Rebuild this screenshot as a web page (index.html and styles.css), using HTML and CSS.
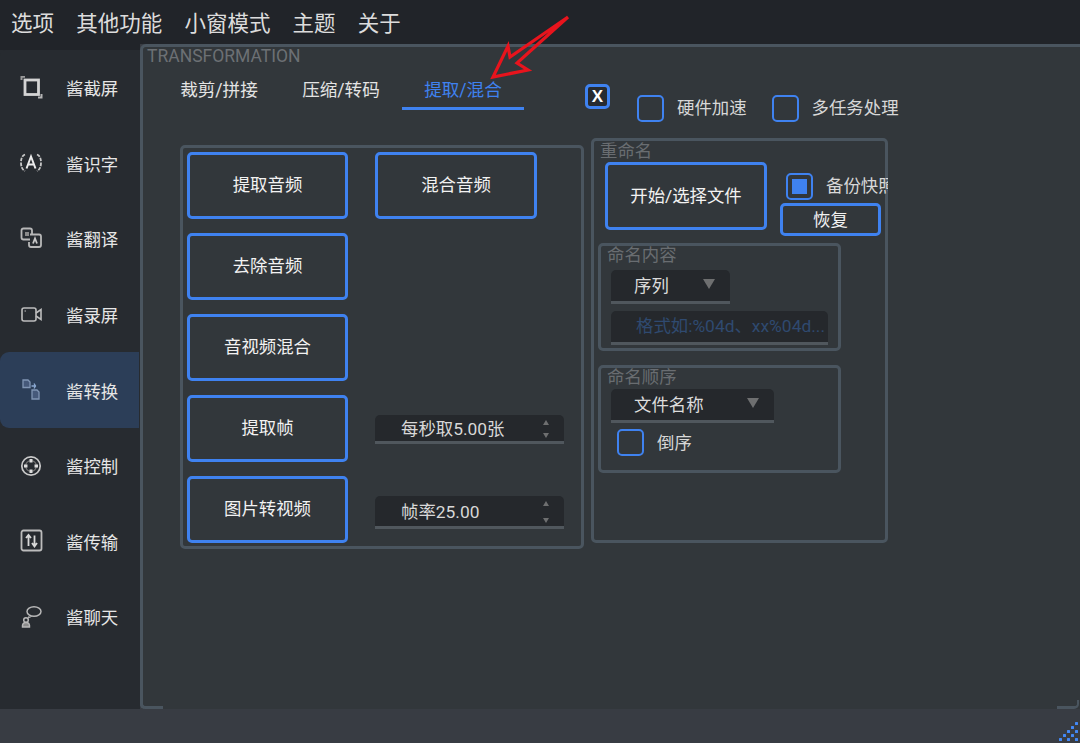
FILE: index.html
```html
<!DOCTYPE html>
<html lang="zh">
<head>
<meta charset="utf-8">
<title>TRANSFORMATION</title>
<link rel="stylesheet" href="styles.css">
</head>
<body>
<div class="app">
  <nav class="menubar">
    <span>选项</span><span>其他功能</span><span>小窗模式</span><span>主题</span><span>关于</span>
  </nav>
  <div class="middle">
    <div class="side-wrap">
      <aside class="sidebar">
        <div class="side-item">
          <svg class="ico" viewBox="0 0 24 24" fill="none" stroke="#d4d4d4"><rect x="6" y="4" width="13.500" height="14.500" stroke-width="2.800"/><path d="M2.500 4V0.800H6" stroke-width="2" stroke="#9a9a9a"/><path d="M22.500 18V21.500H19" stroke-width="2" stroke="#b4b4b4"/></svg>
          <span>酱截屏</span>
        </div>
        <div class="side-item">
          <svg class="ico" viewBox="0 0 24 24" fill="none" stroke="#c8c8c8" stroke-width="1.800"><path d="M6 3.500Q2 5 2 11.500T6 20" stroke-dasharray="3.500 1.200"/><path d="M18 3.500Q22 5 22 11.500T18 20" stroke-dasharray="3.500 1.200"/><path d="M7.500 17.500L12 5.500L16.500 17.500M9.500 13.500H14.500" stroke="#ececec" stroke-width="2"/></svg>
          <span>酱识字</span>
        </div>
        <div class="side-item">
          <svg class="ico" viewBox="0 0 24 24" fill="none" stroke="#b8b8b8" stroke-width="1.800"><path d="M11 12.500H4.500Q2.500 12.500 2.500 10.500V3.500Q2.500 1.500 4.500 1.500H11Q13 1.500 13 3.500V7.500"/><path d="M11 7.500H20Q22 7.500 22 9.500V18Q22 20 20 20H12Q10 20 10 18V15"/><rect x="6" y="5" width="4" height="4" fill="#8a8a8a" stroke="none"/><path d="M14 16.500L16 11.500L18 16.500" stroke="#c8c8c8"/></svg>
          <span>酱翻译</span>
        </div>
        <div class="side-item">
          <svg class="ico" viewBox="0 0 24 24" fill="none" stroke="#bdbdbd" stroke-width="1.600"><rect x="3" y="5" width="14" height="13" rx="2"/><path d="M17 10L22 6.500V16.500L17 13"/><path d="M5.500 8H7" stroke-width="1"/></svg>
          <span>酱录屏</span>
        </div>
        <div class="side-item active">
          <svg class="ico" viewBox="0 0 24 24" fill="#46597a" stroke="#8095b4" stroke-width="1.300"><path d="M4 2H9L11 4V9.500H4Z"/><path d="M13 12H18L20 14V21H13Z"/><path d="M12.500 8H16M15 5.500L16.500 8L15 10.500" stroke="#8dabd4" fill="none"/></svg>
          <span>酱转换</span>
        </div>
        <div class="side-item">
          <svg class="ico" viewBox="0 0 24 24" fill="none" stroke="#cacaca" stroke-width="1.700"><circle cx="12" cy="12" r="9.200"/><circle cx="12" cy="12" r="5.400" stroke-width="1.200" stroke="#777"/><g fill="#dcdcdc" stroke="none"><rect x="10.500" y="5" width="3" height="3.500"/><rect x="10.500" y="15.500" width="3" height="3.500"/><rect x="5" y="10.500" width="3.500" height="3"/><rect x="15.500" y="10.500" width="3.500" height="3"/></g></svg>
          <span>酱控制</span>
        </div>
        <div class="side-item">
          <svg class="ico" viewBox="0 0 24 24" fill="none" stroke="#bcbcbc" stroke-width="1.800"><rect x="2.500" y="1.500" width="20" height="20" rx="2"/><path d="M9.500 17V6.500M7 9L9.500 6L12 9M15.500 6.500V17M13 14L15.500 17.500L18 14" stroke="#d8d8d8"/></svg>
          <span>酱传输</span>
        </div>
        <div class="side-item">
          <svg class="ico" viewBox="0 0 24 24" fill="none" stroke="#b8b8b8" stroke-width="1.500"><ellipse cx="15" cy="6.500" rx="7" ry="4.800"/><path d="M10.500 10.500L9 13L12.500 11.500" stroke-width="1"/><circle cx="7" cy="15" r="2.300"/><path d="M3.500 22Q3 17.500 7 17.500T10.500 22Z" fill="#8a8a8a"/></svg>
          <span>酱聊天</span>
        </div>
      </aside>
    </div>
    <main class="panel">
      <div class="panel-title">TRANSFORMATION</div>
      <div class="header-row">
        <div class="tabs">
          <div class="tab">裁剪/拼接</div>
          <div class="tab">压缩/转码</div>
          <div class="tab current">提取/混合</div>
        </div>
        <div class="close-box">X</div>
        <label class="check hw"><i class="box"></i><span>硬件加速</span></label>
        <label class="check mt"><i class="box"></i><span>多任务处理</span></label>
      </div>
      <div class="body-row">
        <section class="group media">
          <button class="btn">提取音频</button>
          <button class="btn">混合音频</button>
          <button class="btn">去除音频</button>
          <div></div>
          <button class="btn">音视频混合</button>
          <div></div>
          <button class="btn">提取帧</button>
          <div class="spin short"><span>每秒取5.00张</span><span class="arrows"><i class="up"></i><i class="down"></i></span></div>
          <button class="btn">图片转视频</button>
          <div class="spin tall"><span>帧率25.00</span><span class="arrows"><i class="up"></i><i class="down"></i></span></div>
        </section>
        <section class="group rename">
          <div class="legend rename-legend">重命名</div>
          <div class="rename-top">
            <button class="btn start">开始/选择文件</button>
            <div class="rename-side">
              <label class="check backup"><i class="box on"></i><span class="clip">备份快照</span></label>
              <button class="btn restore">恢复</button>
            </div>
          </div>
          <div class="group sub content-box">
            <div class="legend">命名内容</div>
            <div class="field combo seq"><span>序列</span><i class="tri"></i></div>
            <div class="field input">格式如:%04d、xx%04d...</div>
          </div>
          <div class="group sub order-box">
            <div class="legend">命名顺序</div>
            <div class="field combo name"><span>文件名称</span><i class="tri"></i></div>
            <label class="check reverse"><i class="box"></i><span>倒序</span></label>
          </div>
        </section>
      </div>
    </main>
  </div>
  <footer class="statusbar">
    <svg class="grip" width="24" height="24" viewBox="0 0 24 24" fill="#4388f5">
      <rect x="19" y="3" width="3" height="3" rx="0.500"/>
      <rect x="15" y="7" width="3" height="3" rx="0.500"/>
      <rect x="11" y="11" width="3" height="3" rx="0.500"/><rect x="19" y="11" width="3" height="3" rx="0.500"/>
      <rect x="7" y="15" width="3" height="3" rx="0.500"/><rect x="15" y="15" width="3" height="3" rx="0.500"/>
      <rect x="3" y="19" width="3" height="3" rx="0.500"/><rect x="11" y="19" width="3" height="3" rx="0.500"/><rect x="19" y="19" width="3" height="3" rx="0.500"/>
    </svg>
  </footer>
  <svg class="arrow" width="90" height="74" viewBox="0 0 90 74" fill="none" stroke="#e8141d" stroke-width="3.200" stroke-linejoin="miter">
    <path d="M84 3L26 43L24 32L9 63L44 56L33 49Z"/>
  </svg>
</div>
</body>
</html>
```
FILE: styles.css
```css
* { box-sizing: border-box; }
html, body { margin: 0; padding: 0; }
body {
  width: 1080px;
  height: 743px;
  overflow: hidden;
  background: #383c43;
  font-family: Roboto, "Noto Sans CJK SC", sans-serif;
  color: #e4e4e4;
}
.app { position: relative; width: 1080px; height: 743px; display: flex; flex-direction: column; }

.menubar {
  height: 44px;
  flex: none;
  display: flex;
  align-items: center;
  gap: 22.2px;
  padding: 3px 0 0 11px;
  background: #212429;
  font-size: 21.500px;
  line-height: 30px;
  color: #dcdcdc;
}

.middle { height: 665px; flex: none; display: flex; }
.side-wrap { width: 140px; flex: none; padding-top: 6px; background: linear-gradient(#212429 6px, #272b30 6px); }
.sidebar {
  height: 659px;
  width: 139px;
  background: #272b30;
  border-radius: 6px 0 0 0;
  display: grid;
  grid-auto-rows: 75.6px;
  align-content: start;
}
.side-item {
  display: flex;
  align-items: center;
  gap: 23px;
  padding-left: 19px;
  font-size: 17.4px;
  color: #e6e6e6;
}
.side-item.active { background: #2c3e58; border-radius: 9px 0 0 9px; }
.ico { width: 24px; height: 24px; flex: none; }

.panel {
  position: relative;
  flex: 1;
  background: #32373b;
  border-left: 3px solid #4a555f;
  border-top: 3px solid #4a555f;
  border-radius: 6px 0 0 5px;
  padding-left: 4px;
}
.panel::before {
  content: "";
  position: absolute;
  left: -3px;
  bottom: 0;
  width: 20px;
  height: 6px;
  border-left: 3px solid #4a555f;
  border-bottom: 3px solid #4a555f;
  border-radius: 0 0 0 5px;
}
.panel::after {
  content: "";
  position: absolute;
  right: 1px;
  bottom: 0;
  width: 20px;
  height: 6px;
  border-right: 2px solid #4a555f;
  border-bottom: 3px solid #4a555f;
  border-radius: 0 0 5px 0;
}
.panel-title {
  height: 20px;
  font-size: 17.5px;
  line-height: 18px;
  color: #6c7074;
}

.header-row { height: 71px; display: flex; align-items: flex-start; }
.tabs { display: flex; margin-left: 11px; flex: none; }
.tab {
  width: 122px;
  height: 43px;
  padding-top: 10px;
  text-align: center;
  font-size: 17.6px;
  line-height: 26px;
  color: #e4e4e4;
}
.tab.current { color: #3f82f0; border-bottom: 3px solid #3f82f0; }
.close-box {
  width: 25px;
  height: 25px;
  margin: 17px 0 0 61px;
  flex: none;
  border: 3px solid #3f82f0;
  border-radius: 5px;
  background: #272b30;
  color: #fff;
  font-family: "Liberation Sans", sans-serif;
  font-weight: 700;
  font-size: 17px;
  line-height: 19px;
  text-align: center;
}
.check { display: flex; align-items: center; gap: 13px; font-size: 17.4px; line-height: 27px; color: #d8d8d8; flex: none; }
.box {
  display: flex;
  width: 27px;
  height: 27px;
  flex: none;
  border: 2px solid #3f82f0;
  border-radius: 5px;
}
.box.on { padding: 4px; }
.box.on::before { content: ""; flex: 1; background: #3f82f0; }
.hw { margin: 28px 0 0 27px; }
.mt { margin: 28px 0 0 25px; }

.body-row { display: flex; align-items: flex-start; margin-left: 33px; }
.group { border: 3px solid #4a555f; border-radius: 5px; }
.btn {
  font: inherit;
  font-size: 17.4px;
  color: #f2f2f2;
  background: #32373b;
  border: 3px solid #3f82f0;
  border-radius: 5px;
  padding: 0 0 4px;
}
.media {
  width: 404px;
  height: 404px;
  margin-top: 7px;
  padding: 4px 0 0 4px;
  display: grid;
  grid-template-columns: 161px 189px;
  grid-auto-rows: 67px;
  column-gap: 27px;
  row-gap: 14px;
}
.media > .btn:nth-child(2) { width: 162px; }
.spin {
  display: flex;
  justify-content: space-between;
  margin-top: 20px;
  padding: 0 15px 0 26px;
  background: #25282c;
  border-bottom: 3px solid #50575d;
  border-radius: 5px 5px 0 0;
  font-size: 17.4px;
  color: #d8d8d8;
  align-items: center;
}
.spin > span:first-child { padding-bottom: 2px; }
.short { height: 29px; }
.tall { height: 33px; }
.arrows { display: flex; flex-direction: column; justify-content: space-between; height: 100%; padding: 5px 0 3px; }
.up, .down { display: block; width: 0; height: 0; border-left: 3.500px solid transparent; border-right: 3.500px solid transparent; }
.up { border-bottom: 5px solid #6e6f70; }
.down { border-top: 5px solid #6e6f70; }

.rename {
  width: 297px;
  height: 405px;
  margin-left: 7px;
  padding-left: 4px;
}
.legend { height: 20px; font-size: 17.4px; line-height: 20px; color: #696d71; }
.rename-legend { padding-left: 2px; }
.rename-top { display: flex; margin-left: 7px; height: 75px; margin-top: 1px; }
.start { width: 162px; height: 68px; }
.rename-side { margin-left: 13px; width: 101px; }
.backup { margin: 11px 0 0 6px; height: 27px; gap: 13px; }
.clip { display: block; flex: none; width: 62px; overflow: hidden; white-space: nowrap; }
.restore { width: 101px; height: 33px; margin-top: 3px; display: block; line-height: 24px; padding: 1px 0 0; }
.sub { width: 243px; }
.content-box { height: 108px; margin-top: 6px; padding: 0 0 0 10px; }
.order-box { height: 108px; margin-top: 14px; padding: 0 0 0 10px; }
.sub .legend { margin-left: -4px; }
.content-box .legend { margin-bottom: 5px; margin-top: -1px; }
.order-box .legend { margin-top: -1px; margin-bottom: 2px; }
.field {
  display: flex;
  align-items: center;
  height: 34px;
  background: #25282c;
  border-bottom: 3px solid #50575d;
  border-radius: 5px 5px 0 0;
  font-size: 17.4px;
  color: #dcdcdc;
  padding: 0 0 3px 23px;
}
.combo { justify-content: space-between; padding-right: 15px; }
.seq { width: 119px; }
.name { width: 163px; }
.tri { width: 0; height: 0; border-left: 6px solid transparent; border-right: 6px solid transparent; border-top: 10px solid #6e6f70; }
.input {
  width: 217px;
  margin-top: 7px;
  padding: 0 0 5px 25px;
  color: #2f4a70;
  white-space: nowrap;
  overflow: hidden;
}
.reverse { margin: 5px 0 0 6px; }
.reverse span { padding-top: 2px; }

.statusbar { position: relative; height: 34px; flex: none; background: #383c43; }
.grip { position: absolute; right: 0; bottom: 0; }
.arrow { position: absolute; left: 484px; top: 14px; }
```
